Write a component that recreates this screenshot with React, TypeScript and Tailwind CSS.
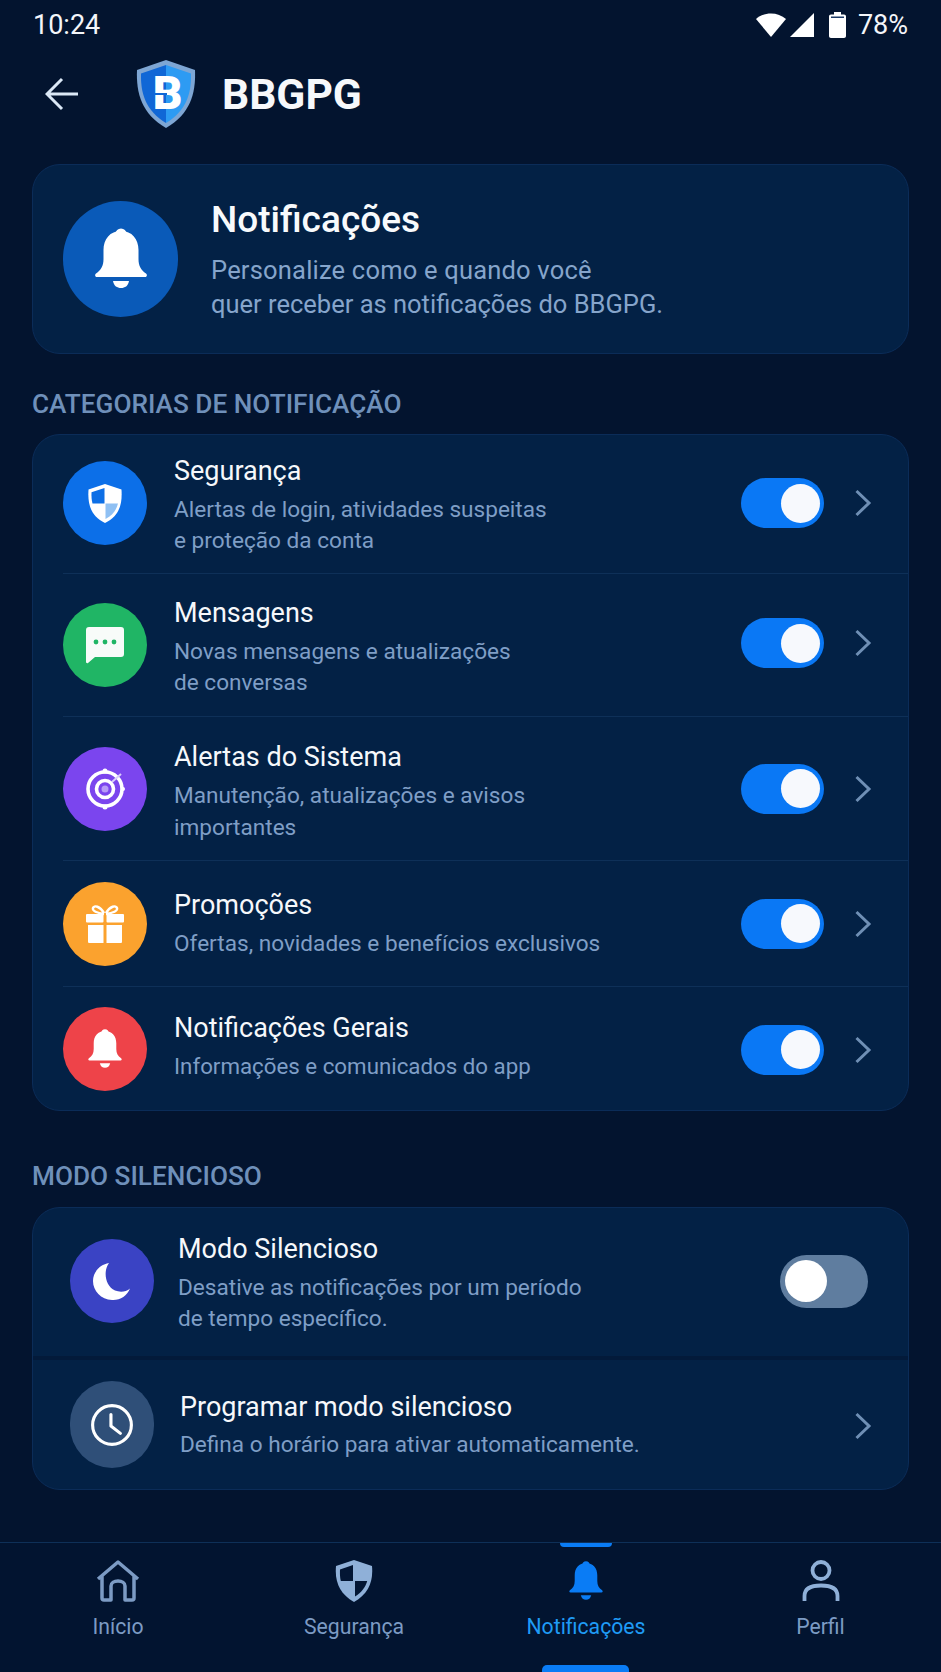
import React from "react";

const Chevron = ({ className = "" }: { className?: string }) => (
  <svg width="18" height="28" viewBox="0 0 18 28" fill="none" className={className}>
    <path d="M2.5 2 L15 14 L2.5 26" stroke="#6f8fb5" strokeWidth="3" strokeLinejoin="miter" />
  </svg>
);

const BellShape = ({ size, color = "#fff" }: { size: number; color?: string }) => (
  <svg width={size} height={size} viewBox="0 0 52 62" fill={color}>
    <circle cx="26" cy="6" r="5.5" />
    <path d="M26 3 C37 3 43.5 11 43.5 22 L43.5 31 C43.5 38 46 42 51 45.5 C52.5 46.6 52 49 50 49 L2 49 C0 49 -.5 46.6 1 45.5 C6 42 8.5 38 8.5 31 L8.5 22 C8.5 11 15 3 26 3 Z" />
    <path d="M18 53 L34 53 C33 58 30 60 26 60 C22 60 19 58 18 53 Z" />
  </svg>
);

const Toggle = ({ on, className = "" }: { on: boolean; className?: string }) =>
  on ? (
    <div className={`flex h-[50px] w-[83px] items-center justify-end rounded-full bg-[#0a78f5] pr-[4px] ${className}`}>
      <div className="h-[39px] w-[39px] rounded-full bg-[#f7f9fd]" />
    </div>
  ) : (
    <div className={`flex h-[53px] w-[88px] items-center rounded-full bg-[#5f7d9f] pl-[5px] ${className}`}>
      <div className="h-[42px] w-[42px] rounded-full bg-white" />
    </div>
  );

const ShieldIcon = () => (
  <svg width="36" height="41" viewBox="0 0 36 41">
    <path d="M18 1 L34.5 6.5 C35.5 22 32 33 18 40 C4 33 .5 22 1.500 6.500 Z" fill="#fff" />
    <path d="M17.500 5 L4.500 9.300 C4.300 14 4.700 17.500 5.500 20.500 L17.500 20.500 Z" fill="#0d6fe6" />
    <path d="M18.500 20.500 L31 20.500 C29.500 27 25.500 32.500 18.500 36 Z" fill="#8fc0f3" />
  </svg>
);

const ChatIcon = () => (
  <svg width="40" height="38" viewBox="0 0 40 38">
    <path d="M4 1 H36 C38 1 39 2 39 4 V28 C39 30 38 31 36 31 H10 L3 37 C2 37.500 1 37 1 36 V4 C1 2 2 1 4 1 Z" fill="#f8fbf9" />
    <circle cx="11" cy="16" r="2.400" fill="#20b565" />
    <circle cx="20" cy="16" r="2.400" fill="#20b565" />
    <circle cx="29" cy="16" r="2.400" fill="#20b565" />
  </svg>
);

const TargetIcon = () => (
  <svg width="40" height="44" viewBox="0 0 40 44" fill="none">
    <circle cx="20" cy="22" r="17" stroke="#fff" strokeWidth="3.600" />
    <circle cx="20" cy="22" r="8.500" stroke="#fff" strokeWidth="3.600" />
    <circle cx="20" cy="22" r="3.500" fill="#b79cf7" />
    <circle cx="20" cy="4" r="2.500" fill="#fff" />
    <circle cx="20" cy="40" r="2.500" fill="#fff" />
    <circle cx="38" cy="22" r="2" fill="#fff" />
    <path d="M27 15 L36 7" stroke="#d9ccfb" strokeWidth="2" />
  </svg>
);

const GiftIcon = () => (
  <svg width="40" height="40" viewBox="0 0 40 40" fill="#fff">
    <path d="M19 9 C15 2 9 1 8 4 C7 7 12 9 19 10 M21 9 C25 2 31 1 32 4 C33 7 28 9 21 10" fill="none" stroke="#fff" strokeWidth="2.400" />
    <rect x="1" y="10" width="17.500" height="8.500" rx="1" />
    <rect x="21.500" y="10" width="17.500" height="8.500" rx="1" />
    <path d="M3 21 H18.500 V39 H4.500 C3.500 39 3 38.500 3 37.500 Z" />
    <path d="M21.500 21 H37 V37.500 C37 38.500 36.500 39 35.500 39 H21.500 Z" />
  </svg>
);

const MoonIcon = () => (
  <svg width="38" height="39" viewBox="0 0 38 39">
    <path d="M16 1 C10 9 12 24 22 28.500 C27 30.500 33 30 37 26.500 C34 34 27 38.500 19 38 C8 37.500 0 29 0 19 C0 10 7 2.500 16 1 Z" fill="#fff" />
  </svg>
);

const ClockIcon = () => (
  <svg width="44" height="44" viewBox="0 0 42 42" fill="none" stroke="#fff">
    <circle cx="21" cy="21" r="18.500" strokeWidth="3" />
    <path d="M20 11 V22 L29 29" strokeWidth="3" strokeLinecap="round" strokeLinejoin="round" />
  </svg>
);

type Row = {
  title: string;
  lines: string[];
  bg: string;
  icon: React.ReactNode;
  height: string;
  circle: string;
  text: string;
  desc: string;
  toggle: string;
};

const rows: Row[] = [
  { title: "Segurança", lines: ["Alertas de login, atividades suspeitas", "e proteção da conta"], bg: "bg-[#0c6fe8]", icon: <ShieldIcon />, height: "h-[139px]", circle: "mb-[2px]", text: "pt-[2px]", desc: "text-[22.6px]", toggle: "mb-[2px]" },
  { title: "Mensagens", lines: ["Novas mensagens e atualizações", "de conversas"], bg: "bg-[#20b565]", icon: <ChatIcon />, height: "h-[143px]", circle: "", text: "pt-[4px]", desc: "text-[22.6px]", toggle: "mb-[4px]" },
  { title: "Alertas do Sistema", lines: ["Manutenção, atualizações e avisos", "importantes"], bg: "bg-[#7b45ee]", icon: <TargetIcon />, height: "h-[144px]", circle: "", text: "pt-[6px]", desc: "text-[22.6px]", toggle: "" },
  { title: "Promoções", lines: ["Ofertas, novidades e benefícios exclusivos"], bg: "bg-[#fba22e]", icon: <GiftIcon />, height: "h-[126px]", circle: "", text: "", desc: "text-[22.6px]", toggle: "" },
  { title: "Notificações Gerais", lines: ["Informações e comunicados do app"], bg: "bg-[#ee4349]", icon: <BellShape size={40} />, height: "h-[123px]", circle: "", text: "pb-[3px]", desc: "text-[22.3px]", toggle: "mt-[2px]" },
];

const Nav = ({ label, icon, active, width }: { label: string; icon: React.ReactNode; active?: boolean; width: string }) => (
  <div className={`relative flex ${width} flex-col items-center pt-[17px]`}>
    <div className="flex h-[42px] items-center justify-center">{icon}</div>
    <div className={`mt-[11px] text-[21.2px] leading-[28px] ${active ? "text-[#1f9bf5]" : "text-[#7c9bc4]"}`}>{label}</div>
  </div>
);

export default function App() {
  return (
    <div className="flex h-[1672px] w-[941px] flex-col overflow-hidden bg-[#03142f] font-['Roboto',sans-serif] text-white">
      <div className="flex h-[48px] shrink-0 items-center justify-between pl-[33px] pr-[33px] pt-[1px]">
        <span className="text-[27px] leading-[30px] text-[#f4f6fa]">10:24</span>
        <div className="flex items-center">
          <svg width="30" height="24" viewBox="0 0 30 24" fill="#fff"><path d="M0 6 C8 -1.500 22 -1.500 30 6 L15 24 Z" /></svg>
          <svg width="24" height="24" viewBox="0 0 24 24" fill="#fff" className="ml-[4px]"><path d="M24 0 V24 H0 Z" /></svg>
          <svg width="17" height="26" viewBox="0 0 17 26" fill="#fff" className="ml-[15px]"><path d="M5 0 H12 V2.500 H15 C16.200 2.500 17 3.300 17 4.500 V24 C17 25.200 16.200 26 15 26 H2 C.8 26 0 25.200 0 24 V4.500 C0 3.300 .8 2.500 2 2.500 H5 Z" /><rect x="2" y="4.500" width="13" height="1.500" fill="#1c3a66" /></svg>
          <span className="ml-[12px] text-[27px] leading-[30px] text-[#f4f6fa]">78%</span>
        </div>
      </div>

      <div className="flex h-[92px] shrink-0 items-center pl-[45px]">
        <svg width="33" height="34" viewBox="0 0 33 34" fill="none" stroke="#dbe8f6" strokeWidth="3">
          <path d="M17 2 L2 17 L17 32 M2 17 H33" />
        </svg>
        <svg width="60" height="68" viewBox="0 0 60 68" className="ml-[58px]">
          <path d="M30 0 L59 10 C60 34 54 54 30 68 C6 54 0 34 1 10 Z" fill="#7ea6d4" />
          <path d="M30 5 L55 13.500 C55.500 34 50 51 30 63 Z" fill="#2d9bf3" />
          <path d="M30 5 L5 13.500 C4.500 34 10 51 30 63 Z" fill="#1067d6" />
          <text x="31.500" y="49" textAnchor="middle" fontFamily="Roboto, sans-serif" fontWeight="900" fontSize="46" fill="#fff">B</text>
          <path d="M19 33 H31 V35 H19 Z" fill="#1067d6" />
        </svg>
        <span className="ml-[26px] text-[42.6px] font-bold leading-[50px] text-[#f6f8fb]">BBGPG</span>
      </div>

      <div className="flex min-h-0 flex-1 flex-col px-[32px] pt-[24px]">
        <div className="flex h-[190px] shrink-0 items-center rounded-[28px] border border-[#0b2c58] bg-[#032145] pl-[30px]">
          <div className="flex h-[116px] w-[115px] shrink-0 items-center justify-center rounded-full bg-[#0a5ab8]">
            <BellShape size={62} />
          </div>
          <div className="ml-[33px] flex flex-col pt-[2px]">
            <div className="text-[37px] font-medium leading-[42px] text-[#f8fafc]">Notificações</div>
            <div className="mt-[12px] text-[25.5px] leading-[34px] text-[#86a5cb]"><span className="tracking-[0.2px]">Personalize como e quando você</span><br />quer receber as notificações do BBGPG.</div>
          </div>
        </div>

        <div className="mt-[35px] text-[26.2px] font-medium leading-[30px] text-[#6f90ba]">CATEGORIAS DE NOTIFICAÇÃO</div>

        <div className="mt-[15px] shrink-0 overflow-hidden rounded-[28px] border border-[#0b2c58] bg-[#032145]">
          {rows.map((r, i) => (
            <div key={r.title} className={`ml-[30px] flex ${r.height} items-center ${i < rows.length - 1 ? "border-b border-[#0e3058]" : ""}`}>
              <div className={`flex h-[84px] w-[84px] shrink-0 items-center justify-center rounded-full ${r.bg} ${r.circle}`}>{r.icon}</div>
              <div className={`ml-[27px] flex min-w-0 flex-1 flex-col ${r.text}`}>
                <div className="text-[27px] leading-[34px] text-[#f6f8fb]">{r.title}</div>
                <div className={`mt-[6px] ${r.desc} leading-[31.500px] text-[#7f9ec6]`}>
                  {r.lines.map((l) => (
                    <div key={l}>{l}</div>
                  ))}
                </div>
              </div>
              <Toggle on className={r.toggle} />
              <Chevron className={`ml-[30px] mr-[36px] ${r.toggle}`} />
            </div>
          ))}
        </div>

        <div className="mt-[50px] text-[26.2px] font-medium leading-[30px] text-[#6f90ba]">MODO SILENCIOSO</div>

        <div className="mt-[16px] shrink-0 overflow-hidden rounded-[28px] border border-[#0b2c58] bg-[#032145]">
          <div className="flex h-[152px] items-center border-b-[4px] border-[#031a3a] pl-[37px] pr-[40px]">
            <div className="mb-[2px] flex h-[84px] w-[84px] shrink-0 items-center justify-center rounded-full bg-[#3a43c4]">
              <MoonIcon />
            </div>
            <div className="ml-[24px] flex min-w-0 flex-1 flex-col pt-[2px]">
              <div className="text-[27px] leading-[34px] text-[#f6f8fb]">Modo Silencioso</div>
              <div className="mt-[6px] text-[22.6px] leading-[31.500px] text-[#7f9ec6]">Desative as notificações por um período<br />de tempo específico.</div>
            </div>
            <Toggle on={false} className="mb-[2px]" />
          </div>
          <div className="flex h-[129px] items-center pl-[37px]">
            <div className="flex h-[87px] w-[84px] shrink-0 items-center justify-center rounded-full bg-[#2f4f78]">
              <ClockIcon />
            </div>
            <div className="ml-[26px] flex min-w-0 flex-1 flex-col pt-[2px]">
              <div className="text-[27px] leading-[34px] text-[#f6f8fb]">Programar modo silencioso</div>
              <div className="mt-[5px] text-[22.6px] leading-[32px] text-[#7f9ec6]">Defina o horário para ativar automaticamente.</div>
            </div>
            <Chevron className="mr-[36px] mt-[2px]" />
          </div>
        </div>
      </div>

      <div className="relative flex h-[130px] shrink-0 border-t border-[#0e3058] bg-[#021430]">
        <Nav
          width="w-[236px]"
          label="Início"
          icon={
            <svg width="44" height="42" viewBox="0 0 44 42" fill="none" stroke="#7c9bc4" strokeWidth="3.500" strokeLinejoin="round">
              <path d="M2 19 L22 2 L42 19 M6 16 V38 C6 39.500 6.500 40 8 40 H15 V26 C15 23 18 21 22 21 C26 21 29 23 29 26 V40 H36 C37.500 40 38 39.500 38 38 V16" />
            </svg>
          }
        />
        <Nav
          width="w-[236px]"
          label="Segurança"
          icon={
            <svg width="38" height="42" viewBox="0 0 38 42">
              <path d="M19 0 L37 6 C38.500 22 33 34 19 42 C5 34 -.5 22 1 6 Z" fill="#8fb0d8" />
              <path d="M18 5 L5 9.500 C4.800 14 5 18 5.800 21 L18 21 Z" fill="#031634" />
              <path d="M20 21 L32.200 21 C30.500 27 26.500 32.500 20 36.500 Z" fill="#031634" />
            </svg>
          }
        />
        <Nav width="w-[228px]" label="Notificações" active icon={<BellShape size={40} color="#0a7cf5" />} />
        <Nav
          width="w-[241px]"
          label="Perfil"
          icon={
            <svg width="38" height="42" viewBox="0 0 38 42" fill="none" stroke="#8fb0d8" strokeWidth="3.800">
              <circle cx="19" cy="10.500" r="8.500" />
              <path d="M2.500 41 V36 C2.500 29 8 25.500 19 25.500 C30 25.500 35.500 29 35.500 36 V41" />
            </svg>
          }
        />
        <div className="absolute left-[560px] top-0 h-[4px] w-[52px] rounded-b-[4px] bg-[#0a7cf5]" />
        <div className="absolute bottom-0 left-[542px] h-[7px] w-[87px] rounded-t-[5px] bg-[#0a7cf5]" />
      </div>
    </div>
  );
}
